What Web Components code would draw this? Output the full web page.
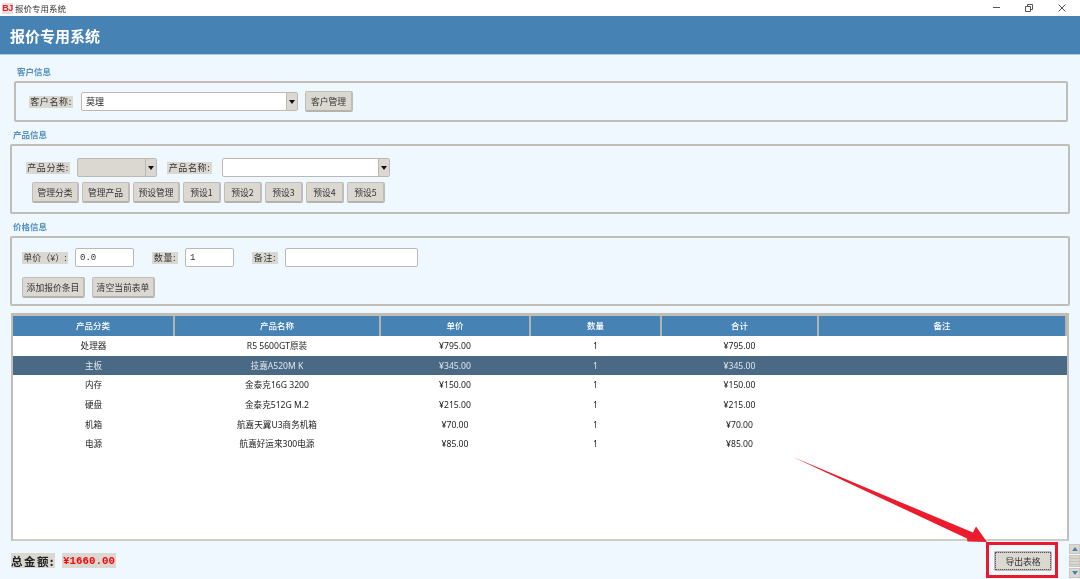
<!DOCTYPE html>
<html lang="zh">
<head>
<meta charset="utf-8">
<title>报价专用系统</title>
<style>
html, body { margin: 0; height: 579px; overflow: hidden; background: #f0f8ff; }
body { font-family: "Noto Sans CJK SC", "Liberation Sans", sans-serif; font-size: 9px; color: #222; }
</style>
</head>
<body>
<quote-app></quote-app>
<script>
class TitleBar extends HTMLElement {
    connectedCallback() {
        this.attachShadow({mode: 'open'}).innerHTML = `
            <style>
:host { display: flex; align-items: center; height: 16px; background: #fff; font-size: 8.5px; color: #333; }
.logo { width: 11px; height: 11px; margin: 0 2px 0 2px; background: #e4dedc; color: #e3202c; font: bold 9px/11px "Liberation Sans", sans-serif; text-align: center; letter-spacing: -0.5px; }
.name { flex: 1; line-height: 16px; }
svg { display: block; width: 120px; height: 16px; }
</style>
            <span class="logo">BJ</span>
            <span class="name">报价专用系统</span>
            <svg viewBox="0 0 120 16" fill="none" stroke="#555" stroke-width="1">
                <path d="M33 7.5h7"/>
                <path d="M65.5 6.5h5v5h-5zM67.5 6.5v-2h5v5h-2"/>
                <path d="M98.5 4.5l7 7M105.5 4.5l-7 7"/>
            </svg>`;
    }
}

class AppHeader extends HTMLElement {
    connectedCallback() {
        this.attachShadow({mode: 'open'}).innerHTML = `
            <style>
:host { display: flex; align-items: center; height: 39px; padding-left: 10px; background: #4682b4; border-bottom: 1px solid #a9cce6; box-sizing: border-box; color: #fff; font-size: 15px; font-weight: 700; }
</style>
            <slot></slot>`;
    }
}

class FormGroup extends HTMLElement {
    connectedCallback() {
        this.attachShadow({mode: 'open'}).innerHTML = `
            <style>
:host { display: block; }
.title { height: 16px; line-height: 12px; padding-left: 3px; color: #5590c0; font-size: 8.5px; font-weight: 700; }
.box { border: 2px solid #c0bdb7; border-radius: 2px; box-sizing: border-box; height: var(--box-height); padding: var(--box-padding); }
</style>
            <div class="title">${this.getAttribute('title')}</div>
            <div class="box"><slot></slot></div>`;
    }
}

class FormRow extends HTMLElement {
    connectedCallback() {
        this.attachShadow({mode: 'open'}).innerHTML = `
            <style>
:host { display: flex; align-items: center; }
</style>
            <slot></slot>`;
    }
}

class FieldLabel extends HTMLElement {
    connectedCallback() {
        this.attachShadow({mode: 'open'}).innerHTML = `
            <style>
:host { display: block; height: 12px; line-height: 12px; background: #dbd8d2; color: #333; font-size: 9px; letter-spacing: 0.6px; white-space: nowrap; text-align: center; }
</style>
            <slot></slot>`;
    }
}

class ComboBox extends HTMLElement {
    connectedCallback() {
        this.attachShadow({mode: 'open'}).innerHTML = `
            <style>
:host { display: flex; height: 19px; box-sizing: border-box; border: 1px solid #bdb9b2; border-radius: 2px; background: #fff; font-size: 9px; color: #222; }
:host([disabled]) { background: #dbd8d2; }
.text { flex: 1; padding-left: 4px; line-height: 17px; }
.arrow { width: 10px; display: flex; align-items: center; justify-content: center; background: #dbd8d2; border-left: 1px solid #bdb9b2; }
.arrow i { border-top: 4px solid #111; border-left: 3.5px solid transparent; border-right: 3.5px solid transparent; width: 0; height: 0; }
</style>
            <span class="text"><slot></slot></span>
            <span class="arrow"><i></i></span>`;
    }
}

class PushButton extends HTMLElement {
    connectedCallback() {
        this.attachShadow({mode: 'open'}).innerHTML = `
            <style>
:host { display: flex; align-items: center; justify-content: center; height: 21px; box-sizing: border-box; background: #dbd8d2; border: 1px solid #c0bdb7; border-bottom: 2px solid #b5b2ab; border-right: 2px solid #c0bdb7; border-radius: 2px; color: #333; font-size: 8.8px; white-space: nowrap; }
:host([focused]) { border: 2px solid #bcb9b2; outline: 1px dotted #555; outline-offset: -2px; }
</style>
            <slot></slot>`;
    }
}

class TextField extends HTMLElement {
    connectedCallback() {
        this.attachShadow({mode: 'open'}).innerHTML = `
            <style>
:host { display: block; height: 19px; box-sizing: border-box; border: 1px solid #bdb9b2; border-radius: 2px; background: #fff; padding-left: 4px; color: #333; font: 9px/18px "Liberation Mono", monospace; }
</style>
            <slot></slot>`;
    }
}

class QuoteTable extends HTMLElement {
    connectedCallback() {
        const columns = ['产品分类', '产品名称', '单价', '数量', '合计', '备注'];
        const rows = [
            ['处理器', 'R5 5600GT原装', '¥795.00', '1', '¥795.00', ''],
            ['主板', '技嘉A520M K', '¥345.00', '1', '¥345.00', ''],
            ['内存', '金泰克16G 3200', '¥150.00', '1', '¥150.00', ''],
            ['硬盘', '金泰克512G M.2', '¥215.00', '1', '¥215.00', ''],
            ['机箱', '航嘉天翼U3商务机箱', '¥70.00', '1', '¥70.00', ''],
            ['电源', '航嘉好运来300电源', '¥85.00', '1', '¥85.00', '']
        ];
        const selected = 1;
        this.attachShadow({mode: 'open'}).innerHTML = `
            <style>
:host { display: block; height: 228px; box-sizing: border-box; border: 2px solid #c0bdb7; border-bottom-color: #cfccc6; background: #fff; font-size: 8.6px; color: #222; overflow: hidden; }
.head, .row { display: grid; grid-template-columns: 161px 206px 150px 131px 157px 1fr; }
.head { grid-template-columns: 162px 206px 150px 131px 157px 1fr; height: 21px; padding-top: 1px; box-sizing: border-box; background: #c0bdb7; }
.head div { background: #4682b4; color: #fff; font-size: 8.5px; text-align: center; line-height: 19px; font-weight: 500; border-right: 2px solid #b4b4ae; box-sizing: border-box; }
.row { height: 19.7px; line-height: 20.7px; text-align: center; font-family: "Noto Sans", "Noto Sans CJK SC", sans-serif; overflow: hidden; }
.row.sel { background: #4a6984; color: #dfe6ec; }
</style>
            <div class="head">${columns.map(c => `<div>${c}</div>`).join('')}</div>
            ${rows.map((r, i) => `<div class="row${i === selected ? ' sel' : ''}">${r.map(c => `<span>${c}</span>`).join('')}</div>`).join('')}`;
    }
}

class TotalBar extends HTMLElement {
    connectedCallback() {
        this.attachShadow({mode: 'open'}).innerHTML = `
            <style>
:host { display: flex; align-items: flex-start; height: 37px; box-sizing: border-box; padding-left: 11px; }
.cap, .sum { margin-top: 12px; height: 15px; line-height: 17px; background: #dbd8d2; font-weight: 700; white-space: nowrap; }
.cap { width: 44px; color: #222; font-size: 11.5px; letter-spacing: 1.4px; text-align: center; }
.sum { width: 54px; margin-left: 7px; color: #ff0000; font-family: "Liberation Mono", "Noto Sans CJK SC", monospace; font-size: 10.8px; text-align: center; }
.space { flex: 1; }
push-button { width: 58px; height: 20px; margin-top: 10px; margin-right: 17px; }
.scroll { width: 11px; margin-top: 3px; height: 34px; box-sizing: border-box; display: flex; flex-direction: column; gap: 1px; }
.scroll span { display: flex; align-items: center; justify-content: center; background: #dbd8d2; border: 1px solid #c9c6c0; box-sizing: border-box; }
.up, .down { height: 10px; }
.scroll .thumb { flex: 1; background: repeating-linear-gradient(#dbd8d2 0 2px, #c4c1bb 2px 3px); }
.up i, .down i { width: 0; height: 0; border-left: 3.5px solid transparent; border-right: 3.5px solid transparent; }
.up i { border-bottom: 4px solid #4682b4; }
.down i { border-top: 4px solid #4682b4; }
</style>
            <span class="cap">总金额:</span>
            <span class="sum">¥1660.00</span>
            <span class="space"></span>
            <push-button focused>导出表格</push-button>
            <div class="scroll">
                <span class="up"><i></i></span>
                <span class="thumb"></span>
                <span class="down"><i></i></span>
            </div>`;
    }
}

// red arrow and frame drawn over the screenshot
class ExportCallout extends HTMLElement {
    connectedCallback() {
        this.attachShadow({mode: 'open'}).innerHTML = `
            <style>
:host { position: absolute; left: 0; top: 0; width: 1080px; height: 579px; pointer-events: none; }
svg { display: block; }
</style>
            <svg width="1080" height="579" viewBox="0 0 1080 579">
                <polygon points="793,457 973,532.6 976,526.5 987,542 967.5,541.5 967,538.5" fill="#ea1c2d"/>
                <rect x="987.5" y="543.5" width="69" height="33" fill="none" stroke="#e8192c" stroke-width="3"/>
            </svg>`;
    }
}

class QuoteApp extends HTMLElement {
    connectedCallback() {
        this.attachShadow({mode: 'open'}).innerHTML = `
            <style>
:host { display: block; position: relative; height: 579px; overflow: hidden; background: #f0f8ff; filter: blur(0.3px); }
main { display: flex; flex-direction: column; padding-top: 10px; }
.customer { margin: 0 12px 6px 14px; --box-height: 41px; --box-padding: 8px 0 0 13px; }
.product { margin: 0 10px 6px 10px; --box-height: 70px; --box-padding: 12px 0 0 14px; }
.price { margin: 0 10px 7px 10px; --box-height: 70px; --box-padding: 10px 0 0 10px; }
quote-table { margin: 0 11px; }
.second { margin-top: 5px; }
.price .second { margin-top: 10px; }
.buttons { gap: 3px; margin-left: 6px; }
.price .buttons { gap: 7px; margin-left: 0; }
</style>
            <title-bar></title-bar>
            <app-header>报价专用系统</app-header>
            <main>
                <form-group class="customer" title="客户信息">
                    <form-row>
                        <field-label style="width:44px">客户名称:</field-label>
                        <combo-box style="width:217px;margin:0 7px 0 8px">莫理</combo-box>
                        <push-button style="width:48px">客户管理</push-button>
                    </form-row>
                </form-group>
                <form-group class="product" title="产品信息">
                    <form-row>
                        <field-label style="width:44px">产品分类:</field-label>
                        <combo-box disabled style="width:80px;margin:0 10px 0 7px"></combo-box>
                        <field-label style="width:45px">产品名称:</field-label>
                        <combo-box style="width:168px;margin-left:10px"></combo-box>
                    </form-row>
                    <form-row class="second buttons">
                        <push-button style="width:47px">管理分类</push-button>
                        <push-button style="width:48px">管理产品</push-button>
                        <push-button style="width:47px">预设管理</push-button>
                        <push-button style="width:38px">预设1</push-button>
                        <push-button style="width:38px">预设2</push-button>
                        <push-button style="width:38px">预设3</push-button>
                        <push-button style="width:38px">预设4</push-button>
                        <push-button style="width:38px">预设5</push-button>
                    </form-row>
                </form-group>
                <form-group class="price" title="价格信息">
                    <form-row>
                        <field-label style="width:46px;letter-spacing:0">单价（¥）:</field-label>
                        <text-field style="width:59px;margin:0 18px 0 7px">0.0</text-field>
                        <field-label style="width:26px">数量:</field-label>
                        <text-field style="width:49px;margin:0 18px 0 7px">1</text-field>
                        <field-label style="width:26px">备注:</field-label>
                        <text-field style="width:133px;margin-left:7px"></text-field>
                    </form-row>
                    <form-row class="second buttons">
                        <push-button style="width:63px">添加报价条目</push-button>
                        <push-button style="width:63px">清空当前表单</push-button>
                    </form-row>
                </form-group>
                <quote-table></quote-table>
                <total-bar></total-bar>
            </main>
            <export-callout></export-callout>`;
    }
}

window.customElements.define('title-bar', TitleBar);
window.customElements.define('app-header', AppHeader);
window.customElements.define('form-group', FormGroup);
window.customElements.define('form-row', FormRow);
window.customElements.define('field-label', FieldLabel);
window.customElements.define('combo-box', ComboBox);
window.customElements.define('push-button', PushButton);
window.customElements.define('text-field', TextField);
window.customElements.define('quote-table', QuoteTable);
window.customElements.define('total-bar', TotalBar);
window.customElements.define('export-callout', ExportCallout);
window.customElements.define('quote-app', QuoteApp);
</script>
</body>
</html>
